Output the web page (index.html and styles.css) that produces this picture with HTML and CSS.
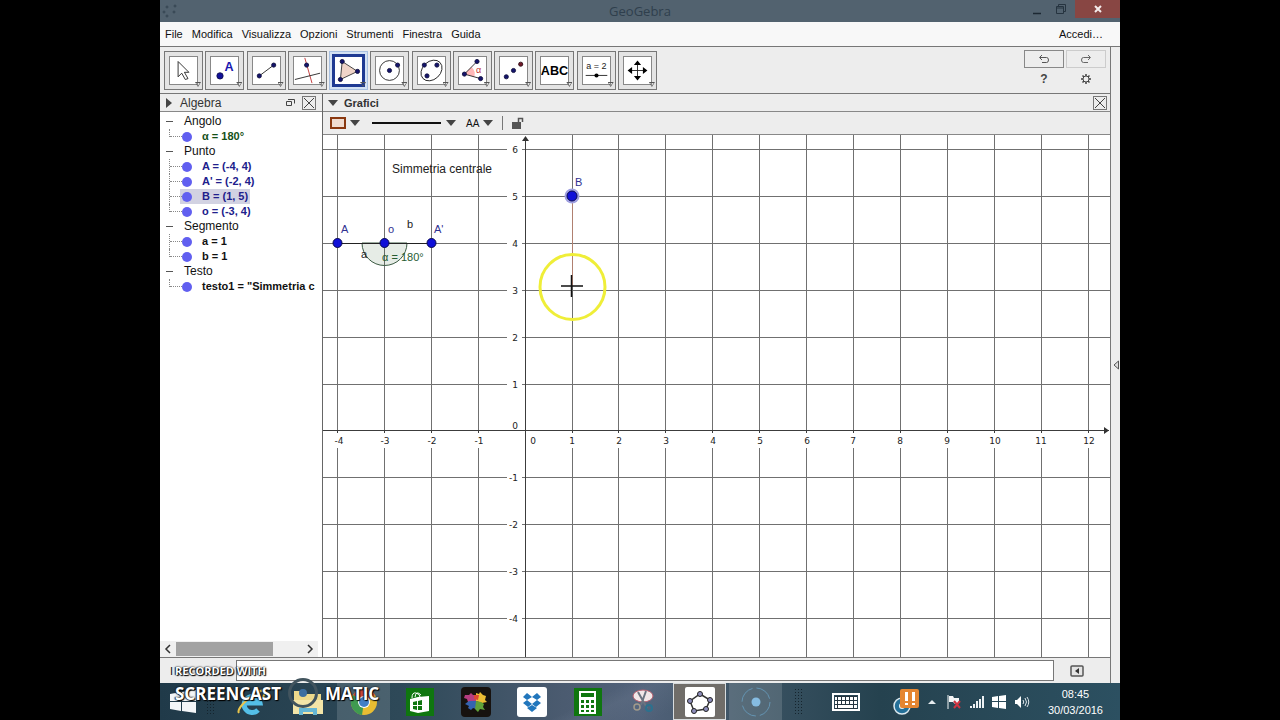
FILE: index.html
```html
<!DOCTYPE html>
<html lang="it">
<head>
<meta charset="utf-8">
<title>GeoGebra</title>
<link rel="stylesheet" href="styles.css">
</head>
<body>
<div class="screen">
  <header class="titlebar">
    <svg class="app-mark" width="18" height="14" viewBox="0 0 18 14" fill="none" stroke="#33434f"><circle cx="6" cy="3" r="1"/><circle cx="14" cy="2" r="1"/><circle cx="3" cy="8" r="1"/><circle cx="13" cy="8" r="1"/><circle cx="6" cy="12" r="1"/></svg>
    <h1 class="title">GeoGebra</h1>
    <div class="window-buttons">
      <button class="win-btn" aria-label="Riduci"><svg width="10" height="12"><path d="M1 10.500h8" stroke="#1c2833" stroke-width="1.500"/></svg></button>
      <button class="win-btn" aria-label="Ripristina"><svg width="12" height="12" fill="none" stroke="#263440"><path d="M3.500 3V1.500h7v7H9M1.500 3.500h7v7h-7zM1.500 5h7"/></svg></button>
      <button class="win-btn close" aria-label="Chiudi"><svg width="10" height="10"><path d="M2 2l6 6M8 2l-6 6" stroke="#f4ecec" stroke-width="2"/></svg></button>
    </div>
  </header>

  <nav class="menubar">
    <button>File</button><button>Modifica</button><button>Visualizza</button><button>Opzioni</button><button>Strumenti</button><button>Finestra</button><button>Guida</button>
    <button class="login">Accedi…</button>
  </nav>

  <div class="workarea">
  <div class="content">
  <div class="toolbar">
    <div class="tools">
      <button class="tool" aria-label="Muovi"><svg viewBox="0 0 30 30"><path d="M9 5v17l4-4 4 7 3-1-4-7h5z" fill="#fff" stroke="#222"/></svg></button>
      <button class="tool" aria-label="Punto"><svg viewBox="0 0 30 30"><circle cx="10" cy="21" r="3.500" fill="#10109a" stroke="#111150"/><text x="15" y="15" class="tool-a">A</text></svg></button>
      <button class="tool" aria-label="Retta"><svg viewBox="0 0 30 30"><path d="M7 21L23 9" stroke="#222"/><g class="dot"><circle cx="7" cy="21" r="2.300"/><circle cx="23" cy="9" r="2.300"/></g></svg></button>
      <button class="tool" aria-label="Perpendicolare"><svg viewBox="0 0 30 30"><path d="M12 1l8 28" stroke="#c03030"/><path d="M1 25l28-7" stroke="#222"/><circle class="dot" cx="14" cy="9" r="2.300"/></svg></button>
      <button class="tool selected" aria-label="Poligono"><svg viewBox="0 0 30 30"><path d="M8 5L25 16 6 25z" fill="#f0d4c8" stroke="#333"/><g class="dot"><circle cx="8" cy="5" r="2.300"/><circle cx="25" cy="16" r="2.300"/><circle cx="6" cy="25" r="2.300"/></g></svg></button>
      <button class="tool" aria-label="Circonferenza"><svg viewBox="0 0 30 30"><circle cx="15" cy="15" r="11" fill="none" stroke="#222"/><g class="dot"><circle cx="15" cy="15" r="2.300"/><circle cx="24" cy="9" r="2.300"/></g></svg></button>
      <button class="tool" aria-label="Ellisse"><svg viewBox="0 0 30 30"><ellipse cx="15" cy="15" rx="13" ry="10" transform="rotate(-43 15 15)" fill="none" stroke="#222"/><g class="dot"><circle cx="7" cy="9" r="2.300"/><circle cx="21" cy="9" r="2.300"/><circle cx="10" cy="21" r="2.300"/></g></svg></button>
      <button class="tool" aria-label="Angolo"><svg viewBox="0 0 30 30"><path d="M6 19l8-8a11 11 0 0 1 3 11z" fill="#ffb8b8"/><path d="M20 5L6 19l18 5" fill="none" stroke="#222"/><g class="dot"><circle cx="20" cy="5" r="2.300"/><circle cx="6" cy="19" r="2.300"/><circle cx="24" cy="24" r="2.300"/></g><text x="19" y="18" class="tool-alpha">α</text></svg></button>
      <button class="tool" aria-label="Simmetria"><svg viewBox="0 0 30 30"><g class="dot"><circle cx="7" cy="22" r="2.300"/><circle cx="15" cy="15" r="2.300"/></g><circle cx="23" cy="8" r="2.300" fill="#701828" stroke="#301018"/></svg></button>
      <button class="tool" aria-label="Testo"><svg viewBox="0 0 30 30"><text x="15" y="20" text-anchor="middle" class="tool-abc">ABC</text></svg></button>
      <button class="tool" aria-label="Slider"><svg viewBox="0 0 30 30"><text x="15" y="13" text-anchor="middle" class="tool-eq">a = 2</text><path d="M3 20.500h24" stroke="#222"/><circle cx="15" cy="20.500" r="2.300"/></svg></button>
      <button class="tool" aria-label="Muovi vista"><svg viewBox="0 0 30 30"><path d="M15 7v16M7 15h16" stroke="#222"/><path d="M15 4l4 5h-8zM15 26l4-5h-8zM4 15l5-4v8zM26 15l-5-4v8z"/></svg></button>
    </div>
    <div class="tool-side">
      <button class="undo" aria-label="Annulla"><svg width="12" height="10" fill="none" stroke="#555"><path d="M4 1L1.500 3.500 4 6M2 3.500h6.500q2 0 2 2.500t-2 2.500H4"/></svg></button>
      <button class="redo" aria-label="Ripeti"><svg width="12" height="10" fill="none" stroke="#666"><path d="M8 1l2.500 2.500L8 6M10 3.500H3.500q-2 0-2 2.500t2 2.500H8"/></svg></button>
      <button class="plain" aria-label="Aiuto">?</button>
      <button class="plain" aria-label="Impostazioni"><svg width="12" height="12" fill="none" stroke="#444"><circle cx="6" cy="6" r="3"/><path d="M6 1v2M6 9v2M1 6h2M9 6h2M2.500 2.500L4 4M8 8l1.500 1.500M9.500 2.500L8 4M4 8L2.500 9.500" stroke-width="1.500"/></svg></button>
    </div>
  </div>

  <main class="views">
    <section class="algebra">
      <div class="view-head">
        <svg width="8" height="10"><path d="M1 0l6 5-6 5z" fill="#444"/></svg>
        <h2>Algebra</h2>
        <button class="icon-btn push" aria-label="Stacca"><svg width="11" height="10" fill="none" stroke="#444"><path d="M1.500 3.500h5v4h-5zM3 1.500h6.500v4"/></svg></button>
        <button class="icon-btn boxed" aria-label="Chiudi Algebra"><svg width="12" height="12"><path d="M1 1l10 10M11 1L1 11" stroke="#444"/></svg></button>
      </div>
      <div class="tree">
        <h3>Angolo</h3>
        <ul><li class="green"><span>α = 180°</span></li></ul>
        <h3>Punto</h3>
        <ul class="blue"><li><span>A = (-4, 4)</span></li><li><span>A' = (-2, 4)</span></li><li class="current"><span>B = (1, 5)</span></li><li><span>o = (-3, 4)</span></li></ul>
        <h3>Segmento</h3>
        <ul><li><span>a = 1</span></li><li><span>b = 1</span></li></ul>
        <h3>Testo</h3>
        <ul><li><span>testo1 = "Simmetria c</span></li></ul>
      </div>
      <div class="scroll">
        <button class="icon-btn" aria-label="Scorri a sinistra"><svg width="8" height="10"><path d="M6 1L2 5l4 4" fill="none" stroke="#333" stroke-width="1.500"/></svg></button>
        <div class="track"><div class="thumb"></div></div>
        <button class="icon-btn" aria-label="Scorri a destra"><svg width="8" height="10"><path d="M2 1l4 4-4 4" fill="none" stroke="#333" stroke-width="1.500"/></svg></button>
      </div>
    </section>

    <section class="graphics">
      <div class="view-head">
        <svg width="10" height="8"><path d="M0 1h10L5 7z" fill="#444"/></svg>
        <h2 class="strong">Grafici</h2>
        <button class="icon-btn boxed push" aria-label="Chiudi Grafici"><svg width="12" height="12"><path d="M1 1l10 10M11 1L1 11" stroke="#444"/></svg></button>
      </div>
      <div class="stylebar">
        <button class="icon-btn" aria-label="Colore"><svg width="30" height="14"><rect x="1" y="2" width="14" height="10" fill="#f0dcd0" stroke="#8a3810" stroke-width="2"/><path d="M20 4h10l-5 6z" fill="#444"/></svg></button>
        <button class="icon-btn line-style" aria-label="Stile linea"><svg width="86" height="14"><path d="M0 7h69" stroke="#111" stroke-width="2"/><path d="M74 4h10l-5 6z" fill="#444"/></svg></button>
        <button class="icon-btn label-style" aria-label="Etichette"><span>AA</span><svg width="10" height="14"><path d="M0 4h10L5 10z" fill="#444"/></svg></button>
        <button class="icon-btn lock" aria-label="Blocca"><svg width="14" height="14"><path d="M1 6h9v7H1z" fill="#555"/><path d="M7.500 6V2.500h4V6" fill="none" stroke="#555" stroke-width="1.500"/></svg></button>
      </div>
      <svg class="plane" role="img" aria-label="Piano cartesiano">
        <path class="grid" d="M14.500 0v900M61.500 0v900M108.500 0v900M155.500 0v900M249.500 0v900M295.500 0v900M342.500 0v900M389.500 0v900M436.500 0v900M483.500 0v900M530.500 0v900M577.500 0v900M624.500 0v900M671.500 0v900M718.500 0v900M765.500 0v900"/>
        <path class="grid" d="M0 14.500h1600M0 61.500h1600M0 108.500h1600M0 155.500h1600M0 202.500h1600M0 249.500h1600M0 342.500h1600M0 389.500h1600M0 436.500h1600M0 483.500h1600"/>
        <rect x="184" y="0" width="15" height="520" fill="#fff"/>
        <rect x="0" y="298" width="1600" height="15" fill="#fff"/>
        <path class="axis" d="M0 295.500h786M202.500 2v900"/>
        <path d="M199 6l3.500-5 3.500 5zM781 292l5 3.500-5 3.500z" fill="#333"/>
        <path class="axis" d="M14.500 295v3M61.500 295v3M108.500 295v3M155.500 295v3M249.500 295v3M295.500 295v3M342.500 295v3M389.500 295v3M436.500 295v3M483.500 295v3M530.500 295v3M577.500 295v3M624.500 295v3M671.500 295v3M718.500 295v3M765.500 295v3"/>
        <g class="ticks" text-anchor="middle">
          <text x="16" y="309">-4</text><text x="62" y="309">-3</text><text x="109" y="309">-2</text><text x="156" y="309">-1</text><text x="210" y="309">0</text><text x="249" y="309">1</text><text x="296" y="309">2</text><text x="343" y="309">3</text><text x="390" y="309">4</text><text x="437" y="309">5</text><text x="484" y="309">6</text><text x="530" y="309">7</text><text x="577" y="309">8</text><text x="624" y="309">9</text><text x="672" y="309">10</text><text x="718" y="309">11</text><text x="766" y="309">12</text>
        </g>
        <g class="ticks" text-anchor="end">
          <text x="195" y="18">6</text><text x="195" y="65">5</text><text x="195" y="112">4</text><text x="195" y="159">3</text><text x="195" y="206">2</text><text x="195" y="253">1</text><text x="195" y="294">0</text><text x="195" y="346">-1</text><text x="195" y="393">-2</text><text x="195" y="440">-3</text><text x="195" y="487">-4</text>
        </g>
        <path d="M39 108a22 22 0 0 0 45 0z" fill="#064006" fill-opacity="0.100" stroke="#3a5a42"/>
        <path d="M14 108.500h94" stroke="#222"/>
        <path d="M249.500 61v90" stroke="#b08070"/>
        <circle cx="249" cy="61" r="7.500" fill="#a0a0e0"/>
        <g class="point"><circle cx="14.500" cy="108" r="4.500"/><circle cx="61.500" cy="108" r="4.500"/><circle cx="108.500" cy="108" r="4.500"/><circle cx="249" cy="61" r="5"/></g>
        <text class="note" x="69" y="38">Simmetria centrale</text>
        <g class="name"><text x="18" y="98">A</text><text x="65" y="98">o</text><text x="111" y="98">A'</text><text x="252" y="51">B</text></g>
        <text class="seg" x="84" y="93">b</text><text class="seg" x="38" y="123">a</text>
        <text class="angle" x="59" y="126">α = 180°</text>
        <circle cx="249.500" cy="152" r="32.500" fill="none" stroke="#efee38" stroke-width="3"/>
        <path d="M238 151h22M248.500 140v22" stroke="#111" stroke-width="1.500"/>
      </svg>
    </section>
  </main>

  <form class="inputbar">
    <label for="cmd">I</label>
    <input id="cmd" type="text">
    <button type="button" class="icon-btn" aria-label="Guida inserimento"><svg width="14" height="12"><rect x="1" y="1" width="12" height="10" rx="1" fill="#e4e4e4" stroke="#555" stroke-width="1.500"/><path d="M9 3v6L5 6z" fill="#333"/></svg></button>
  </form>
  </div>
  <button class="rail" aria-label="Mostra barra laterale"><svg width="6" height="10"><path d="M5.500 1v8L1 5z" fill="#ddd" stroke="#555"/></svg></button>
  </div>

  <footer class="taskbar">
    <button class="start" aria-label="Start"><svg width="26" height="24" viewBox="0 0 26 24" fill="#f4f6f8"><path d="M0 4l11-2v9H0zM12 2l14-2v11H12zM0 12h11v9L0 19zM12 12h14v11l-14-2z"/></svg></button>
    <span class="grip"></span>
    <div class="apps">
      <button aria-label="Internet Explorer"><svg width="32" height="30" viewBox="0 0 32 30" fill="none"><path d="M8 16h16A8 8 0 1 0 22 23" stroke="#54bfe8" stroke-width="5"/><path d="M3 26C-1 21 23 1 28 4q2 2-1 6" stroke="#eac54b" stroke-width="2"/></svg></button>
      <button aria-label="Esplora file"><svg width="32" height="30" viewBox="0 0 32 30"><path d="M2 4h10l2 3h15v18H2z" fill="#edd98b"/><path d="M1 13h30v14H1z" fill="#f3e5a8"/><path d="M7 28v-7h18v7h-4v-3H11v3z" fill="#66b7d5"/></svg></button>
      <button class="open" aria-label="Chrome"><svg width="28" height="28" viewBox="0 0 28 28"><circle cx="14" cy="14" r="13" fill="#e8bd32"/><path d="M14 14L3 7a13 13 0 0 1 22 0z" fill="#cf473b"/><path d="M14 14L3 7a13 13 0 0 0 9 20z" fill="#3f9a50"/><circle cx="14" cy="14" r="6" fill="#fff"/><circle cx="14" cy="14" r="5" fill="#427fc7"/></svg></button>
      <button aria-label="Store"><svg width="28" height="28" viewBox="0 0 28 28"><path d="M0 0h28v28H0z" fill="#0f760f"/><path d="M4 11l8-2 11-1v15l-11 2-8-2z" fill="#fff"/><path d="M6 10q0-6 4-5t4 4M9 9q1-7 6-2" fill="none" stroke="#fff"/><path d="M7 14l4-1v4H7zM12 13l4-1v5h-4zM7 18h4v4l-4-1zM12 18h4v4h-4z" fill="#0f760f"/></svg></button>
      <button aria-label="Puzzle"><svg width="30" height="30" viewBox="0 0 30 30"><rect width="30" height="30" rx="4" fill="#17120f"/><path d="M4 8h4l2-2 2 2h3v4l2 1-2 2H7l-1-3-3-1z" fill="#b63d80"/><path d="M15 6l3 1 1-2 3 3 3 1-1 4 2 2-5 1-6-2z" fill="#ecbc34"/><path d="M8 14h7v8l-3-1-2 2-3-2 1-2-4-2z" fill="#3564b1"/><path d="M15 14l5 1 3 2-1 3 2 3-5-1-2 3-3-3z" fill="#61a23a"/><path d="M13 8h5l-1 5-4-1z" fill="#db4933"/></svg></button>
      <button aria-label="Dropbox"><svg width="30" height="30" viewBox="0 0 30 30"><rect width="30" height="30" rx="3" fill="#fff"/><path d="M10 6l5 4-5 3-4-3zM20 6l4 4-4 3-5-3zM10 13l5 4-4 3-5-4zM20 13l4 3-5 4-4-3zM10 21l5-3 5 3-5 4z" fill="#2176bc"/></svg></button>
      <button aria-label="Calcolatrice"><svg width="28" height="28" viewBox="0 0 28 28"><path d="M0 0h28v28H0z" fill="#0f760f"/><rect x="5" y="3" width="17" height="23" fill="#fff"/><path d="M7 5h13v4H7zM7 12h3v3H7zM12 12h3v3h-3zM17 12h3v3h-3zM7 17h3v3H7zM12 17h3v3h-3zM17 17h3v3h-3zM7 22h3v2H7zM12 22h3v2h-3zM17 22h3v2h-3z" fill="#0f760f"/></svg></button>
      <button aria-label="Cattura"><svg width="26" height="28" viewBox="0 0 26 28"><ellipse cx="12" cy="8" rx="10" ry="6" fill="#f1e7e8" stroke="#b76070"/><path d="M7 4l9 16M15 3l-5 14" stroke="#6a7480" stroke-width="2"/><circle cx="6" cy="19" r="3" fill="none" stroke="#a19a8b" stroke-width="1.500"/><circle cx="18" cy="20" r="3" fill="none" stroke="#2c718e" stroke-width="2"/></svg></button>
      <button class="active" aria-label="GeoGebra"><svg width="30" height="30" viewBox="0 0 30 30"><rect width="30" height="30" rx="2" fill="#fff"/><path d="M15 7l10 6-4 9-12 2-4-10z" fill="none" stroke="#333" stroke-width="1.500"/><g fill="#8d8dbb" stroke="#222"><circle cx="15" cy="7" r="2.500"/><circle cx="25" cy="13" r="2.500"/><circle cx="21" cy="22" r="2.500"/><circle cx="9" cy="24" r="2.500"/><circle cx="5" cy="14" r="2.500"/></g></svg></button>
      <button class="open" aria-label="Registratore"><svg width="30" height="30" viewBox="0 0 30 30"><circle cx="15" cy="15" r="14" fill="none" stroke="#6494b2" stroke-dasharray="18 4"/><circle cx="15" cy="15" r="4.500" fill="#86bce2"/></svg></button>
    </div>
    <span class="grip"></span>
    <div class="tray">
      <button class="keyboard" aria-label="Tastiera"><svg width="28" height="18" viewBox="0 0 28 18"><rect x="1" y="1" width="26" height="16" fill="none" stroke="#fff" stroke-width="2"/><path d="M3 3h22v12H3z" fill="#fff"/><path d="M3 3.500h22M3 7.500h22M3 11.500h22M3 15.500h22M5.500 3v12M9.500 3v9M13.500 3v9M17.500 3v9M21.500 3v12" stroke="#24343f"/></svg></button>
      <button aria-label="Registrazione in pausa"><svg width="28" height="28" viewBox="0 0 28 28"><circle cx="10" cy="18" r="8" fill="#247099" stroke="#dce9ef" stroke-width="1.500"/><circle cx="10" cy="18" r="3" fill="#e8f1f5"/><rect x="8" y="1" width="19" height="19" rx="2" fill="#e58631"/><path d="M13 4h3v9h-3zM20 4h3v9h-3zM13 15h3v2h-3zM20 15h3v2h-3z" fill="#fff"/></svg></button>
      <button aria-label="Icone nascoste"><svg width="8" height="6"><path d="M4 1l4 4H0z" fill="#e6ecef"/></svg></button>
      <button class="flag" aria-label="Notifiche"><svg width="16" height="16"><path d="M2 1v14" stroke="#f4f6f7"/><path d="M3 2h4l1 2h5v6H9L7 8H3z" fill="#f4f6f7"/><path d="M8 7l6 7M14 7l-6 7" stroke="#ce3340" stroke-width="2"/></svg></button>
      <button aria-label="Rete"><svg width="14" height="14" fill="#edf1f3"><path d="M0 11h2v2H0zM3 9h2v4H3zM6 6h2v7H6zM9 4h2v9H9zM12 1h2v12h-2z"/></svg></button>
      <button aria-label="Windows"><svg width="14" height="14" fill="#fff"><path d="M0 2l6-1v5H0zM7 1l7-1v6H7zM0 7h6v6l-6-1zM7 7h7v7l-7-1z"/></svg></button>
      <button aria-label="Volume"><svg width="16" height="14"><path d="M1 5h2l4-4v12L3 9H1z" fill="#fff"/><path d="M9 5q1.500 2 0 4M11 3q3 4 0 8M13 2q3.500 5 0 10" fill="none" stroke="#dfe6ea"/></svg></button>
      <time class="clock" datetime="2016-03-30T08:45"><span>08:45</span><span>30/03/2016</span></time>
    </div>
  </footer>

  <div class="watermark">
    <div class="recorded">RECORDED WITH</div>
    <div class="brand"><span>SCREENCAST</span><svg width="32" height="32"><circle cx="16" cy="16" r="13.500" fill="none" stroke="#42545e" stroke-width="3"/><circle cx="16" cy="16" r="4" fill="#3c6ea0"/></svg><span>MATIC</span></div>
  </div>
</div>
</body>
</html>
```
FILE: styles.css
```css
* { box-sizing: border-box; }
body { margin: 0; background: #000; font: 11px "Liberation Sans", Arial, sans-serif; color: #111; }
h1, h2, h3, ul { margin: 0; padding: 0; font-weight: normal; }
button { border: 0; padding: 0; background: none; font: inherit; color: inherit; }
svg { display: block; }

.screen { position: relative; width: 75%; height: 100vh; margin: 0 auto; display: flex; flex-direction: column; background: #ededed; overflow: hidden; }

.titlebar { display: grid; grid-template-columns: 1fr auto 1fr; align-items: center; height: 22px; background: #52626f; }
.app-mark { margin-left: 1px; }
.title { font: 13px "Open Sans", sans-serif; color: #2f3f4d; }
.window-buttons { display: flex; justify-content: flex-end; align-self: start; }
.win-btn { width: 24px; height: 18px; display: grid; place-items: center; }
.win-btn.close { width: 45px; margin-left: 2px; background: #884643; }

.menubar { display: flex; align-items: center; gap: 9px; height: 25px; padding: 0 17px 0 5px; background: #f8f8f8; border-bottom: 1px solid #777; }
.login { margin-left: auto; }

.workarea { flex: 1; min-height: 0; display: flex; }
.content { flex: 1; min-width: 0; display: flex; flex-direction: column; border-right: 1px solid #777; }
.rail { width: 9px; display: grid; place-items: center; }

.toolbar { display: flex; justify-content: space-between; padding: 4px 4px 2px 4px; height: 47px; border-bottom: 1px solid #777; }
.tools { display: flex; justify-content: space-between; width: 493px; }
.tool { position: relative; width: 39px; height: 39px; padding: 4px; border: 1px solid #777; background: #e4e4e4; }
.tool svg { width: 29px; height: 29px; background: #fff; border: 1px solid #888; }
.tool::after { content: ""; position: absolute; right: 1px; bottom: 2px; width: 6px; height: 5px; background: #555; clip-path: polygon(0 0, 100% 0, 50% 100%, 0 0, 20% 20%, 50% 75%, 80% 20%, 20% 20%); }
.tool.selected { border-color: #a8c0e0; background: #d4e2f4; padding: 2px; }
.tool.selected svg { width: 33px; height: 33px; border: 3px solid #1f3a93; }
.dot { fill: #14146c; stroke: #111140; }
.tool-a { font: bold 14px "Liberation Sans", sans-serif; fill: #1818b0; }
.tool-alpha { font: 10px "Liberation Sans", sans-serif; fill: #c03030; }
.tool-abc { font: bold 14px "Liberation Sans", sans-serif; }
.tool-eq { font: 10px "Liberation Sans", sans-serif; fill: #222; }
.tool-side { display: grid; grid-template-columns: 40px 40px; gap: 2px; align-content: start; margin-top: -1px; }
.tool-side button { height: 18px; display: grid; place-items: center; }
.undo { border: 1px solid #888; }
.redo { border: 1px solid #ccc; }
.plain { font-weight: bold; font-size: 12px; color: #444; }

.views { flex: 1; min-height: 0; display: flex; }
.algebra { width: 163px; display: flex; flex-direction: column; background: #fff; border-right: 1px solid #666; }
.graphics { flex: 1; min-width: 0; display: flex; flex-direction: column; background: #fff; }
.view-head { display: flex; align-items: center; gap: 6px; height: 18px; padding: 0 3px 0 5px; background: #ededed; border-bottom: 1px solid #888; color: #333; flex: none; }
.algebra .view-head { padding-right: 6px; }
.view-head h2 { font-size: 12px; }
.view-head .strong { font-size: 11px; font-weight: bold; }
.algebra h2 { margin-left: 1px; }
.icon-btn { display: flex; align-items: center; }
.push { margin-left: auto; }
.boxed { border: 1px solid #777; }

.tree { flex: 1; padding-top: 2px; overflow: hidden; }
.tree h3 { position: relative; padding-left: 24px; font-size: 12px; line-height: 15px; }
.tree h3::before { content: ""; position: absolute; left: 6px; top: 7px; width: 7px; height: 1px; background: #555; }
.tree ul { list-style: none; margin-left: 9px; }
.tree li { position: relative; height: 15px; padding-left: 10px; border-left: 1px dotted #888; display: flex; }
.tree li::before { content: ""; position: absolute; left: 0; top: 7px; width: 12px; border-top: 1px dotted #888; }
.tree li:last-child { border-left-color: transparent; }
.tree li:last-child::after { content: ""; position: absolute; left: -1px; top: 0; height: 8px; border-left: 1px dotted #888; }
.tree li span { display: flex; align-items: center; gap: 10px; padding: 0 2px; line-height: 15px; font-weight: bold; white-space: nowrap; }
.tree li span::before { content: ""; width: 10px; height: 10px; border-radius: 50%; background: #615ff0; }
.green { color: #155018; }
.blue { color: #20208c; }
.current span { background: #d2d2e2; }

.scroll { display: flex; align-items: center; height: 16px; padding: 0 4px; margin-right: 4px; background: #f0f0f0; }
.track { flex: 1; padding: 0 33px 0 4px; }
.thumb { height: 14px; background: #a2a2a2; }

.stylebar { display: flex; align-items: center; height: 23px; padding-left: 7px; background: #ededed; border-bottom: 1px solid #888; flex: none; }
.line-style { margin-left: 12px; }
.label-style { gap: 4px; margin-left: 8px; font-size: 10px; }
.lock { margin-left: 9px; padding-left: 8px; border-left: 1px solid #777; }
.plane { flex: 1; width: 100%; min-height: 0; font-family: "Liberation Sans", sans-serif; }
.grid { stroke: #707070; fill: none; }
.axis { stroke: #3c3c3c; fill: none; }
.ticks { font-family: "DejaVu Sans", sans-serif; font-size: 9px; fill: #222; }
.point { fill: #1010d8; stroke: #0a0a50; }
.note { font-size: 12px; fill: #222; }
.name { font-size: 11px; fill: #303090; }
.seg { font-size: 11px; fill: #222; }
.angle { font-size: 11px; fill: #285c32; }

.inputbar { display: flex; align-items: center; height: 26px; padding: 0 26px 0 10px; border-top: 1px solid #777; }
.inputbar label { width: 66px; }
.inputbar input { flex: 1; min-width: 0; height: 21px; border: 1px solid #777; background: #fff; margin-right: 16px; }

.taskbar { display: flex; align-items: center; height: 37px; flex: none; background: linear-gradient(155deg, transparent 45%, #6d7c9044 48%, transparent 55%), linear-gradient(90deg, #203a49, #2e4958 25%, #4b5b70 42%, #52627a 50%, #3a5262 62%, #25424f 75%, #2c5061); }
.start { width: 46px; display: grid; place-items: center; }
.grip { width: 9px; height: 28px; background: radial-gradient(circle, #15242d 1px, transparent 1px) 0 0 / 3px 3px; }
.apps { display: flex; gap: 3px; margin: 0 12px 0 10px; height: 100%; }
.apps button { width: 53px; display: grid; place-items: center; }
.apps .open { background: #ffffff24; }
.apps .active { background: #706d69; border: 1px solid #d8dcde; }
.tray { flex: 1; display: flex; align-items: center; gap: 8px; color: #fff; }
.keyboard { margin: 0 24px 0 29px; }
.flag { margin-left: 2px; }
.clock { display: flex; flex-direction: column; align-items: center; margin: 0 17px 0 auto; line-height: 16px; }

.watermark { position: absolute; left: 15px; bottom: 11px; color: #fff; font-family: "Open Sans", sans-serif; font-weight: bold; text-shadow: 1px 1px 1px #000, 0 0 2px #000, -1px 0 1px #333; pointer-events: none; }
.recorded { font-size: 11px; line-height: 12px; }
.brand { display: flex; align-items: center; height: 32px; gap: 6px; font-size: 17px; }
```
